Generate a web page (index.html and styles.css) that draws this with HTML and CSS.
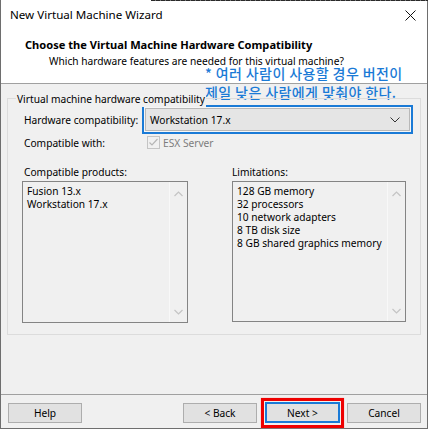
FILE: index.html
```html
<!DOCTYPE html>
<html lang="en">
<head>
<meta charset="utf-8">
<title>New Virtual Machine Wizard</title>
<link rel="stylesheet" href="styles.css">
</head>
<body>
<div class="window">
  <div class="titlebar">
    <span class="title">New Virtual Machine Wizard</span>
    <svg class="close" width="11" height="11" viewBox="0 0 11 11"><path d="M0.5 0.5L10.5 10.5M10.5 0.5L0.5 10.5" stroke="#111" stroke-width="1" fill="none"/></svg>
  </div>
  <div class="header">
    <div class="h-title">Choose the Virtual Machine Hardware Compatibility</div>
    <div class="h-sub">Which hardware features are needed for this virtual machine?</div>
    <div class="note">
      <div class="note-line">* 여러 사람이 사용할 경우 버전이</div>
      <div class="note-line">제일 낮은 사람에게 맞춰야 한다.</div>
    </div>
  </div>
  <div class="content">
    <div class="group">
      <span class="group-title">Virtual machine hardware compatibility</span>
      <div class="row row-hw">
        <span class="lbl lbl-hw">Hardware compatibility:</span>
        <div class="combo-focus">
          <div class="combo">
            <span>Workstation 17.x</span>
            <svg class="combo-arrow" width="10" height="6" viewBox="0 0 10 6"><path d="M0.5 0.5L5 5L9.5 0.5" stroke="#333" stroke-width="1" fill="none"/></svg>
          </div>
        </div>
      </div>
      <div class="row row-compat">
        <span class="lbl lbl-compat">Compatible with:</span>
        <span class="check"><svg width="11" height="11" viewBox="0 0 11 11"><path d="M1.5 5.5L4 8L9.5 2" stroke="#b5b5b5" stroke-width="1.2" fill="none"/></svg></span>
        <span class="disabled">ESX Server</span>
      </div>
      <div class="lists">
        <div class="col col-left">
          <div class="col-label">Compatible products:</div>
          <div class="listbox lb-left">
            <div class="items">
              <div>Fusion 13.x</div>
              <div>Workstation 17.x</div>
            </div>
            <div class="scroll">
              <svg width="9" height="6" viewBox="0 0 9 6"><path d="M0.5 5L4.5 1L8.5 5" stroke="#c4c4c4" stroke-width="1.2" fill="none"/></svg>
              <svg width="9" height="6" viewBox="0 0 9 6"><path d="M0.5 1L4.5 5L8.5 1" stroke="#c4c4c4" stroke-width="1.2" fill="none"/></svg>
            </div>
          </div>
        </div>
        <div class="col col-right">
          <div class="col-label">Limitations:</div>
          <div class="listbox lb-right">
            <div class="items">
              <div>128 GB memory</div>
              <div>32 processors</div>
              <div>10 network adapters</div>
              <div>8 TB disk size</div>
              <div>8 GB shared graphics memory</div>
            </div>
            <div class="scroll">
              <svg width="9" height="6" viewBox="0 0 9 6"><path d="M0.5 5L4.5 1L8.5 5" stroke="#c4c4c4" stroke-width="1.2" fill="none"/></svg>
              <svg width="9" height="6" viewBox="0 0 9 6"><path d="M0.5 1L4.5 5L8.5 1" stroke="#c4c4c4" stroke-width="1.2" fill="none"/></svg>
            </div>
          </div>
        </div>
      </div>
    </div>
  </div>
  <div class="footer">
    <button class="btn">Help</button>
    <div class="spacer"></div>
    <button class="btn">&lt; Back</button>
    <div class="next-wrap">
      <button class="btn btn-default">Next &gt;</button>
      <span class="mark"></span>
    </div>
    <button class="btn">Cancel</button>
  </div>
</div>
</body>
</html>
```

FILE: styles.css
```css
* { box-sizing: border-box; }
html, body { margin: 0; padding: 0; }
body {
  background: #ffffff;
  font-family: "Noto Sans", "Open Sans", sans-serif;
  font-size: 10.2px;
  color: #000;
  width: 428px;
  height: 430px;
  overflow: hidden;
}
.window {
  position: relative;
  width: 428px;
  height: 429px;
  display: flex;
  flex-direction: column;
  border-left: 1px solid #6e6e6e;
  border-right: 1px solid #6e6e6e;
  border-bottom: 1px solid #6e6e6e;
  background: #f0f0f0;
}
.window::before {
  content: "";
  position: absolute;
  top: 0;
  left: 150px;
  right: -1px;
  height: 1px;
  background: repeating-linear-gradient(90deg, #2a2a2a 0 4px, #777 4px 5px);
}
.titlebar {
  height: 30px;
  background: #fff;
  display: flex;
  align-items: center;
  padding-left: 9px;
  padding-right: 11px;
}
.title { flex: 1; font-size: 11.6px; line-height: 16px; }
.close { display: block; }
.header {
  background: #fff;
  height: 54px;
  border-bottom: 1px solid #a0a0a0;
  padding: 7px 0 0 24px;
}
.h-title { font-weight: bold; font-size: 11.1px; line-height: 16px; }
.h-sub { line-height: 12px; margin-top: 2px; padding-left: 24px; }
.note {
  position: absolute;
  left: 204px;
  top: 65px;
  font-family: "Noto Sans CJK KR", sans-serif;
  font-size: 14px;
  font-weight: 500;
  color: #1a7ad6;
  letter-spacing: 0.4px;
  white-space: nowrap;
}
.note-line { line-height: 16px; }
.note-line + .note-line { margin-top: 3px; }
.content {
  flex: 1;
  padding: 14px 6px 0 6px;
}
.group {
  position: relative;
  height: 237px;
  border: 1px solid #dcdcdc;
  padding: 6px 7px 0 16px;
}
.group-title {
  position: absolute;
  left: 8px;
  top: -8px;
  padding: 0 1px;
  background: #f0f0f0;
  line-height: 16px;
}
.row { display: flex; align-items: center; }
.row-hw { height: 29px; }
.lbl-hw { width: 118px; }
.combo-focus {
  width: 271px;
  height: 29px;
  border: 2px solid #1a7ad6;
  padding: 1px;
  background: #f6f6f6;
}
.combo {
  height: 100%;
  border: 1px solid #b8b8b8;
  background: #e5e5e5;
  display: flex;
  align-items: center;
  padding: 0 9px 0 4px;
}
.combo span { flex: 1; }
.row-compat { height: 17px; }
.lbl-compat { width: 123px; }
.check {
  width: 13px;
  height: 13px;
  border: 1px solid #c4c4c4;
  background: #f0f0f0;
  margin-right: 3px;
  display: flex;
  align-items: center;
  justify-content: center;
}
.check svg { display: block; }
.disabled { color: #7d7d7d; }
.lists {
  display: grid;
  grid-template-columns: 166px 174px;
  column-gap: 44px;
  margin: 14px 0 0 -2px;
}
.col-label { line-height: 15px; height: 16px; }
.col-left .col-label { padding-left: 2px; }
.listbox {
  display: flex;
  border: 1px solid #848484;
  background: #f0f0f0;
}
.lb-left { height: 142px; }
.lb-right { height: 141px; }
.items {
  flex: 1;
  padding: 3px 4px 0 4px;
  line-height: 13px;
}
.scroll {
  width: 18px;
  border-left: 1px solid #f8f8f8;
  display: flex;
  flex-direction: column;
  justify-content: space-between;
  align-items: center;
  padding: 9px 0 7px;
}
.scroll svg { display: block; }
.footer {
  height: 34px;
  border-top: 1px solid #a0a0a0;
  display: flex;
  align-items: flex-start;
  padding: 7px 6px 0 7px;
}
.spacer { flex: 1; }
.btn {
  font-family: inherit;
  font-size: 10.2px;
  color: #000;
  width: 74px;
  height: 20px;
  margin: 1px 0 0 0;
  padding: 0;
  border: 1px solid #adadad;
  background: #e1e1e1;
  line-height: 16px;
}
.next-wrap {
  position: relative;
  margin: 0 7px 0 8px;
}
.btn-default {
  width: 75px;
  height: 21px;
  margin: 0;
  border: 2px solid #1a7ad6;
  display: block;
}
.mark {
  position: absolute;
  left: -4px;
  top: -4px;
  width: 83px;
  height: 30px;
  border: 3px solid #ee0000;
  box-shadow: 0 0 1px #ff8080;
}
```
